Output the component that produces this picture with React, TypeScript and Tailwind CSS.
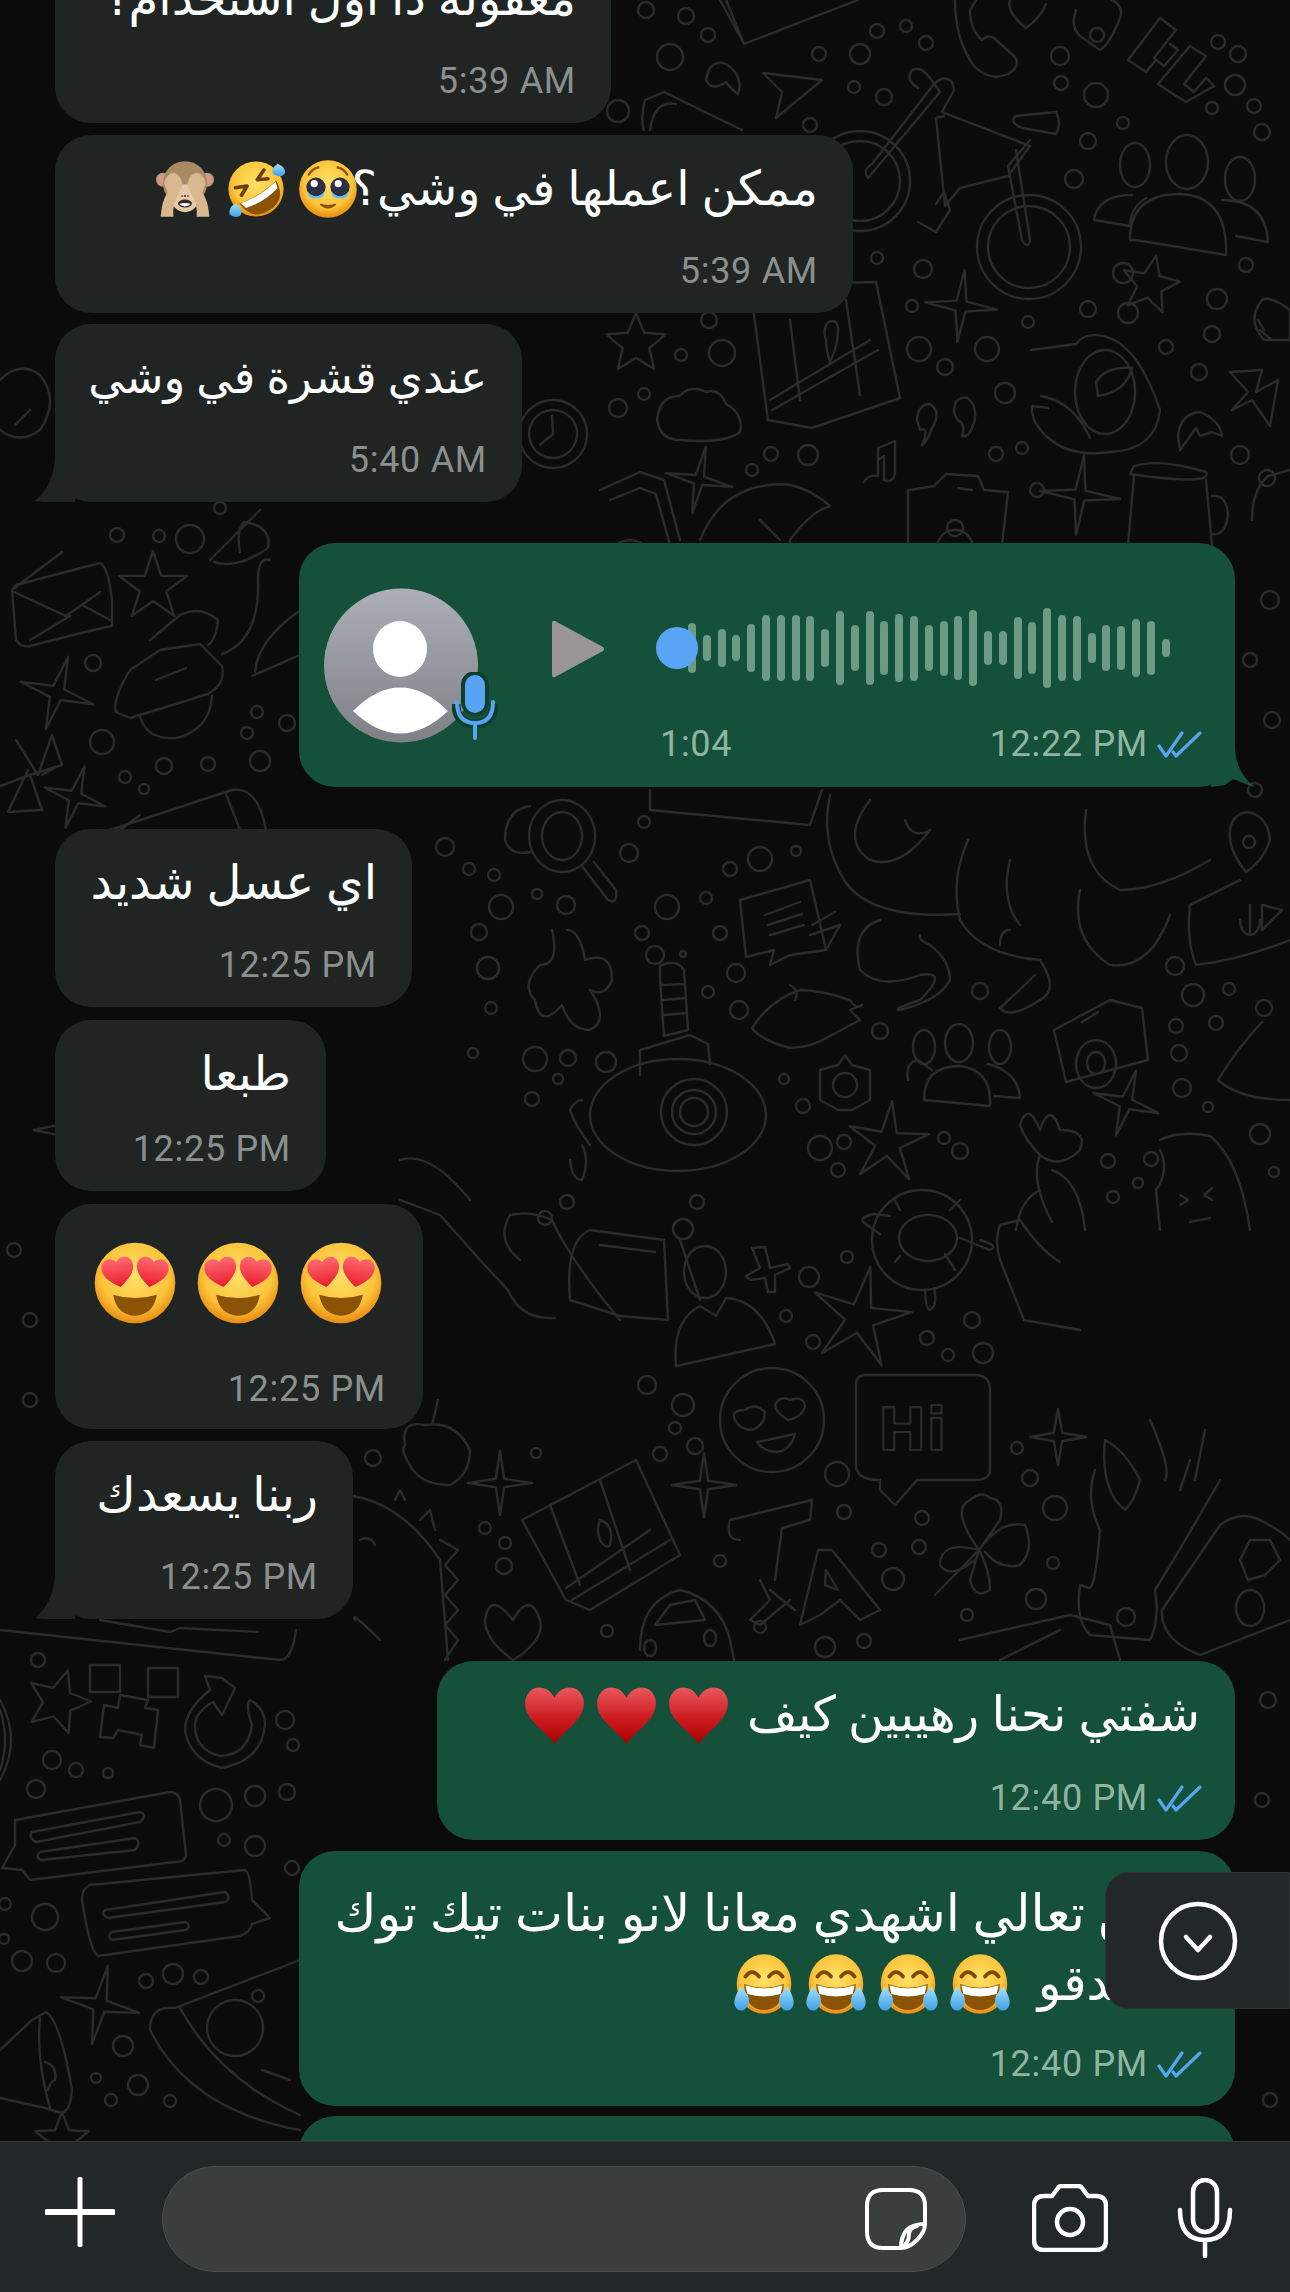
const star = (cx: number, cy: number, R: number, r: number, n: number, rot = 0) => {
  const pts: string[] = [];
  for (let i = 0; i < n * 2; i++) {
    const a = rot + (i * Math.PI) / n - Math.PI / 2;
    const d = i % 2 ? r : R;
    pts.push(`${(cx + d * Math.cos(a)).toFixed(1)} ${(cy + d * Math.sin(a)).toFixed(1)}`);
  }
  return `M${pts.join("L")}Z`;
};

const dots = [
  [646,10,8],[686,16,8],[708,35,7],[670,57,13],[819,54,7],[860,54,10],[877,31,7],[906,26,6],[926,43,7],[854,87,6],[884,97,8],[810,125,7],[618,111,11],[1060,56,9],[1061,83,7],[1096,95,12],[1123,123,6],[1088,141,8],[1074,179,9],[1218,42,7],[1238,54,8],[1235,85,10],[1212,108,6],[1254,106,7],[1262,132,8],[877,258,6],[923,269,9],[912,306,6],[1028,322,6],[919,349,12],[987,349,12],[945,367,8],[1005,393,10],[1123,273,10],[1246,265,7],[1217,299,10],[1088,309,8],[1128,313,10],[1212,334,8],[1166,347,7],[1199,372,8],[709,320,8],[681,355,6],[722,353,13],[644,394,6],[618,408,9],[771,454,7],[808,455,10],[752,470,6],[996,454,7],[1022,448,6],[1037,490,7],[1240,455,9],
  [445,847,9],[469,869,6],[494,875,6],[501,907,12],[537,894,5],[566,905,9],[479,932,8],[488,968,11],[491,1008,6],[644,822,6],[629,853,9],[667,907,12],[706,898,6],[642,933,7],[720,933,7],[655,955,9],[683,954,3],[736,973,9],[708,992,6],[739,1010,9],[730,869,7],[760,859,12],[796,851,5],[473,1053,5],[535,1059,12],[568,1058,8],[606,1062,10],[558,1079,5],[532,1099,7],[784,1079,5],[803,1106,7],[880,1031,8],[980,991,8],[1175,966,9],[1193,995,11],[1229,989,6],[1176,1026,7],[1216,1023,7],[1179,1053,8],[1182,1088,9],[1208,1107,5],[1260,1134,10],[1274,1172,5],[820,1148,12],[844,1142,7],[838,1170,7],[944,1138,6],[960,1151,8],[1108,1161,7],[1151,1159,7],[1138,1183,5],[1113,1197,6],[567,1202,7],[545,1218,7],[697,1202,7],
  [683,1229,10],[847,1257,6],[809,1277,10],[786,1316,6],[813,1342,7],[972,1320,8],[927,1338,7],[948,1355,6],[983,1353,10],[647,1385,9],[683,1405,11],[675,1428,6],[695,1446,8],[660,1454,7],[837,1474,12],[1017,1448,6],[1030,1478,8],
  [373,1458,8],[536,1453,5],[1055,1508,12],[844,1512,7],[922,1518,7],[485,1528,6],[505,1543,6],[504,1566,8],[720,1561,6],[879,1550,7],[919,1547,7],[893,1579,11],[1053,1563,6],[1036,1599,10],[967,1615,6],[1126,1617,9],[607,1631,6],[760,1627,6],[825,1647,10],[864,1641,7],
  [117,535,7],[159,536,6],[190,539,14],[220,508,6],[93,663,8],[102,742,12],[257,712,6],[287,723,8],[247,733,6],[260,761,10],[164,766,8],[208,764,7],[125,777,6],[144,789,5],
  [38,1660,7],[52,1760,9],[76,1770,7],[108,1773,5],[36,1789,9],[216,1805,16],[255,1796,10],[287,1792,8],[224,1840,6],[255,1846,10],[292,1868,7],[5,1904,6],[45,1917,13],[4,1939,5],[22,1961,10],[56,1963,9],[146,1981,7],[173,1974,10],[201,1977,7],[285,1720,9],[293,1745,6],[123,2046,10],[96,2078,5],[138,2085,10],[111,2100,6],[170,2101,6],
  [14,1250,7],[30,1320,7],[30,1400,7],[1270,600,9],[1250,660,7],[1272,720,8],[1255,790,7],[1268,1700,8],[1262,1800,7],[1270,2100,7],
];

const stars: [number, number, number, number, number, number][] = [
  [961,306,36,7,4,0.1],[1150,285,30,13,5,0.2],[636,344,31,14,5,0],[699,480,34,6,4,0.2],[1126,1103,34,7,4,0.3],[888,1143,42,13,5,0.1],[860,1318,52,15,5,0.2],[500,1483,32,6,4,0],[704,1485,32,6,4,0],[1058,1437,28,6,4,0],[153,587,36,14,5,0],[57,693,38,8,4,0.3],[75,797,32,7,4,0.3],[58,1702,33,15,5,0.3],[100,2005,40,8,4,0.2],[1080,495,40,7,4,0.1],[62,1130,28,7,4,0],[62,2140,28,12,5,0],
];

function Wallpaper() {
  return (
    <svg className="absolute inset-0" width="1290" height="2292" viewBox="0 0 1290 2292" fill="none" stroke="#2b2b2b" strokeWidth="2.4" strokeLinecap="round" strokeLinejoin="round">
      {dots.map(([x, y, r], i) => <circle key={i} cx={x} cy={y} r={r} />)}
      {stars.map((s, i) => <path key={i} d={star(s[0], s[1], s[2], s[3], s[4], s[5])} />)}

      {/* bike */}
      <circle cx="1029" cy="247" r="52" /><circle cx="1029" cy="247" r="41" />
      <circle cx="860" cy="181" r="50" /><circle cx="860" cy="181" r="40" />
      <path d="M868 178L940 92 930 78Q922 66 912 70 905 80 918 88M868 178Q862 170 872 164L934 84Q944 74 952 82L954 90 942 112 1030 146 1008 176 960 188 945 206 936 118 944 116M1016 116L1056 112Q1062 124 1056 134L1022 128Q1008 122 1016 116M1030 140L1008 166 1022 240Q1028 250 1030 240L1016 150M936 204L944 192 950 210 936 232 918 222" />
      {/* people top right */}
      <ellipse cx="1135" cy="165" rx="15" ry="22" /><ellipse cx="1187" cy="162" rx="21" ry="27" /><ellipse cx="1240" cy="179" rx="15" ry="22" />
      <path d="M1132 195Q1098 195 1094 220L1130 226Q1130 208 1146 198M1130 240Q1130 194 1180 194 1228 196 1226 255L1136 240ZM1222 200Q1266 200 1268 242L1236 236" />
      {/* handset, heart, bff */}
      <path d="M955 0Q955 40 974 66 990 82 1008 74 1022 66 1014 56L994 38Q988 34 982 40 970 30 970 10L976 0M1010 0Q1006 12 1026 28 1040 18 1046 4" />
      <path d="M1076 10Q1070 26 1080 36L1100 50Q1110 44 1120 18 1124 6 1112 0M1097 28a7 7 0 1 0 .1 0" />
      <path d="M1128 60L1160 18 1176 30 1154 58 1164 66 1178 50 1170 44M1128 60L1146 72 1156 60M1158 84L1190 46 1206 56 1184 84 1194 92 1206 78 1214 86 1186 102 1176 96Z" />
      {/* plane, comma, pencil, map etc */}
      <path d="M763 73L822 80 776 118 782 92ZM720 0L744 44 858 0M744 44L726 0" />
      <path d="M706 80Q710 58 726 64 744 76 738 94 730 88 726 82 712 92 706 80Z" />
      <path d="M645 100L664 92 742 130 M650 130Q654 100 676 104M645 100Q640 120 644 130" />
      <path d="M750 285L876 282 900 398 812 428 768 420ZM790 320L800 400M846 300L860 395M770 400L870 340M772 410L878 350M826 340Q822 330 828 322 838 318 838 330 838 346 830 362 826 350 826 340Z" />
      <path d="M657 420Q660 395 680 396 690 384 706 392 720 388 726 404 744 414 740 432 724 444 680 440 660 440 657 420Z" />
      <path d="M864 482Q868 474 878 476L878 448 895 441 895 474Q892 484 884 480L884 456 878 460" />
      <path d="M917 420Q918 404 930 404 942 412 932 428 928 440 922 445 930 426 920 430ZM955 404Q958 396 968 398 980 410 972 428 968 438 962 436 966 424 958 420 952 414 955 404Z" />
      <path d="M1031 350L1076 344Q1086 330 1110 338 1140 350 1160 410 1156 450 1110 452 1070 458 1046 436 1030 420 1032 406L1048 408M1041 396Q1074 402 1090 438M1105 350a30 42 0 1 0 .1 0M1096 382Q1106 366 1132 368 1126 392 1098 396Z" />
      <path d="M1230 372L1262 370 1256 392 1278 380 1270 426 1252 400 1232 410 1248 392Z" />
      <path d="M1178 436Q1180 414 1200 412 1220 420 1222 436L1212 432 1200 436 1196 428 1180 450Z" />
      <path d="M1262 300Q1270 295 1290 310L1290 340 1264 340Q1246 320 1262 300ZM1258 320L1264 330M1260 330L1272 340" />
      <path d="M910 490L934 486 946 474 978 476 984 490 1008 492 1002 545M908 490L908 545M958 488L972 490M955 530a18 18 0 1 0 .1 0M955 520a8 8 0 1 0 .1 0" />
      <path d="M1134 466Q1160 458 1206 472 1214 486 1130 474ZM1134 476L1128 545M1206 480L1212 545M1212 496Q1226 494 1228 514 1226 536 1212 534" />
      <path d="M1252 520Q1252 490 1268 476L1290 470M1267 470a8 8 0 1 0 .1 0" />
      <path d="M600 490L640 472 664 480 680 540M610 500L640 488 656 494 670 545M630 540a22 22 0 1 0 .1 0" />
      <path d="M700 540Q720 490 770 485 800 480 830 506 810 512 790 540 L790 545M760 520L780 540" />
      <path d="M553 400a34 34 0 1 0 .1 0M553 410a24 24 0 1 0 .1 0M552 416L553 434 540 445" />
      {/* left column 500-830 */}
      <path d="M12 590L62 552M16 585L100 563Q108 566 112 600L112 626Q100 628 30 646 22 648 16 640L12 590ZM14 592L66 616 100 592M70 616L30 640M84 606L110 620" />
      <path d="M150 640L180 615Q200 605 218 620 216 640 208 645M116 712Q112 700 130 670L160 650 200 644 222 666Q226 684 208 694L130 718ZM156 680L186 668M212 696Q210 730 176 738 146 740 140 716M222 654Q260 640 258 580 258 556 270 560M210 560L260 510M214 562Q236 570 268 548 272 526 244 522 236 530 240 552M255 672Q258 640 298 612M252 676L300 655" />
      <path d="M16 740L38 775 52 735 62 765 30 775 0 786M30 775L42 810 8 812 28 770M42 775L58 766" />
      <path d="M110 830L232 790Q258 786 266 830M226 794L240 830M120 830L140 815" />
      {/* creature and cat area */}
      <path d="M830 795Q820 840 844 880 870 920 960 914M870 800Q840 840 870 860 900 870 930 830 912 840 905 820M968 840Q950 880 960 920 980 955 1040 960 1060 990 1040 1000 1010 1020 1000 1008 1020 990 1035 975M1010 860Q1000 900 1020 925M1080 890Q1070 940 1110 965 1150 970 1170 915M1086 810Q1078 870 1120 890 1160 890 1210 860M1000 945Q1000 930 1010 930M880 920Q850 930 860 970 880 990 920 975 950 970 920 1000 890 1010 900 1010 940 1000 950 980 950 960 930 945 918 940 920 935" />
      <path d="M1240 880L1190 905Q1186 940 1196 965 1240 960 1290 940M1250 905v30M1240 920a8 12 0 0 0 20 0M1282 910L1262 930 1262 905Z" />
      <path d="M1248 812Q1268 816 1270 840 1264 860 1246 872 1228 850 1230 830 1232 814 1248 812ZM1249 836a6 6 0 1 0 .1 0" />
      <path d="M562 800a33 36 0 1 0 .1 0M562 812a20 24 0 1 0 .1 0M582 866L608 900Q618 905 616 890L594 862M530 806Q505 810 505 840 510 856 530 852" />
      <path d="M650 790L650 810 810 825 822 790" />
      <path d="M740 900L810 880 826 950 790 955 770 965 774 950 746 957ZM765 915L800 902M768 925L802 914M770 935L804 925M810 935L840 925 826 950M812 925L835 912" />
      <path d="M567 930Q580 930 585 960 612 950 612 980 605 998 590 990 610 1020 590 1030 570 1030 562 1005 540 1030 535 1000 520 985 540 965 560 965 552 930 567 930ZM567 972a10 10 0 1 0 .1 0M552 983H546M580 983H590M567 960V972M567 995V1002" />
      <path d="M660 980L664 1036 688 1030 684 970Q676 958 660 966ZM662 985L684 984M663 1000L686 998M664 1015L687 1013M640 1050L690 1035 708 1044 710 1064M640 1050V1075" />
      <ellipse cx="678" cy="1115" rx="88" ry="56" /><circle cx="694" cy="1112" r="33" /><circle cx="694" cy="1112" r="22" /><circle cx="694" cy="1112" r="14" />
      <path d="M590 1145Q575 1125 570 1110 575 1100 582 1100M570 1160Q572 1180 582 1180 590 1160 582 1145" />
      <path d="M752 1028Q770 1000 800 990 820 990 850 1000 856 1010 862 1005L850 1010 860 1020 830 1036Q810 1048 790 1048 760 1040 752 1028ZM795 1000Q800 990 790 985" />
      <path d="M845 1055L852 1065 870 1070 870 1100 852 1110 838 1110 820 1100 820 1070 838 1065ZM845 1073a12 12 0 1 0 .1 0" />
      <ellipse cx="924" cy="1047" rx="11" ry="17" /><ellipse cx="959" cy="1043" rx="14" ry="19" /><ellipse cx="1000" cy="1047" rx="11" ry="17" />
      <path d="M908 1080Q905 1062 918 1060L932 1070M924 1100Q924 1066 960 1066 992 1070 990 1106ZM988 1064Q1018 1072 1020 1098L994 1096" />
      <path d="M1054 1030L1110 1000 1142 1008 1148 1060 1066 1082ZM1082 1022L1098 1012M1096 1040a20 24 0 1 0 .1 0M1096 1052a9 11 0 1 0 .1 0" />
      <path d="M1264 1000a8 8 0 1 0 .1 0M1262 1022Q1236 1050 1218 1080 1240 1100 1290 1100" />
      <path d="M1020 1125Q1028 1100 1040 1130 1050 1100 1060 1130 1088 1130 1080 1150 1060 1170 1040 1155 1025 1140 1020 1125ZM1040 1155Q1030 1180 1052 1222M1040 1190Q1020 1200 1016 1230M1052 1170Q1080 1180 1085 1230" />
      <path d="M1160 1140Q1180 1130 1210 1136 1240 1160 1250 1230M1160 1150Q1170 1170 1156 1190L1160 1230M1180 1195L1188 1200 1180 1205M1212 1188L1204 1195 1212 1200M1190 1222L1210 1218" />
      {/* turtle */}
      <circle cx="922" cy="1240" r="50" /><ellipse cx="928" cy="1238" rx="29" ry="23" />
      <path d="M890 1216L874 1214Q856 1218 866 1224L880 1234M960 1238L990 1250Q1000 1246 980 1240M925 1290Q926 1310 930 1310 938 1306 934 1288M895 1262L900 1256M955 1270L945 1254M900 1210L895 1200M950 1210L960 1200" />
      <path d="M1000 1225L1020 1220Q1040 1250 1060 1262M1000 1260L1024 1320 1080 1330M1000 1225Q994 1240 1000 1260" />
      <ellipse cx="705" cy="1272" rx="21" ry="26" />
      <path d="M676 1366Q672 1320 700 1306L716 1316 726 1298Q760 1300 775 1344ZM752 1248L760 1268 746 1276 750 1280 765 1278 768 1292 775 1292 775 1275 790 1268 788 1264 770 1268 765 1247Z" />
      {/* love face */}
      <circle cx="772" cy="1420" r="52" />
      <path d="M735 1420Q730 1410 745 1410 755 1402 765 1412 765 1425 752 1430 740 1430 735 1420ZM775 1405Q780 1395 790 1400 805 1395 805 1408 800 1418 788 1420 775 1412 775 1405ZM757 1442L795 1434Q790 1452 775 1452 762 1450 757 1442Z" />
      {/* hi bubble */}
      <path d="M866 1375L975 1375Q990 1375 990 1390L990 1470Q990 1480 975 1480L917 1480 895 1505 880 1490 880 1480Q856 1480 856 1465L856 1385Q856 1375 866 1375Z" />
      <text x="878" y="1450" fontFamily="DejaVu Sans" fontWeight="700" fontSize="58" fill="none" strokeWidth="2.2">Hi</text>
      {/* hand */}
      <path d="M1095 1470Q1085 1500 1100 1530 1095 1590 1089 1588L1080 1585Q1075 1620 1090 1635L1150 1640Q1160 1620 1155 1590 1180 1550 1220 1480M1105 1440Q1125 1450 1140 1480 1135 1500 1125 1510 1100 1490 1105 1440ZM1150 1420Q1172 1470 1165 1480M1190 1460L1180 1490M1205 1430L1195 1480" />
      <path d="M590 1230L664 1240 668 1320 620 1316 570 1300Q565 1240 590 1230ZM600 1245L655 1252M680 1240L700 1300" />
      <path d="M520 1260Q495 1240 510 1215 530 1210 552 1220 570 1260 620 1320M508 1290L480 1260 440 1215 400 1200M400 1160Q430 1150 470 1200M508 1290Q520 1320 555 1318" />
      {/* apple, map 2, dino, clover, gamepad */}
      <path d="M405 1445Q400 1420 425 1425 455 1420 470 1450 470 1475 450 1485 420 1485 410 1465 400 1450 405 1445ZM432 1425L438 1400" />
      <path d="M522 1520L636 1460 680 1555 590 1610 566 1600ZM550 1505L580 1585M600 1480L630 1570M566 1588L650 1530M572 1600L670 1540M600 1520Q596 1530 600 1540 606 1550 610 1545 615 1525 600 1520Z" />
      <path d="M345 1495Q400 1500 440 1560L448 1660M395 1500L400 1490 405 1500M420 1520L430 1510 435 1530M440 1540L458 1550 445 1565 458 1580 445 1595 458 1610 445 1625 458 1640 445 1660M355 1620Q350 1610 380 1640M360 1540Q370 1535 375 1545" />
      <path d="M979 1550Q950 1510 970 1500 982 1490 990 1498 1005 1500 1000 1520ZM979 1550Q940 1540 940 1565 950 1580 975 1560M979 1550Q1000 1520 1025 1525 1035 1550 1020 1565 1000 1570 985 1552M979 1550Q990 1570 990 1590 975 1600 970 1580L979 1550ZM979 1550L935 1595" />
      <path d="M730 1520L812 1500 810 1520 782 1528 775 1580M740 1540Q725 1540 730 1520M760 1580L770 1600 750 1620 760 1625 790 1600M770 1590L795 1610" />
      <path d="M800 1625L818 1550 832 1550 880 1610 860 1620 840 1600 820 1615 800 1625ZM825 1585L826 1570 838 1590Z" />
      <path d="M513 1620Q490 1590 485 1620 485 1640 513 1660 545 1640 540 1620 530 1590 513 1620Z" />
      <path d="M640 1650Q640 1600 680 1590 720 1600 730 1640L734 1660M655 1625L705 1620 695 1600 670 1605ZM650 1640a6 8 0 1 0 .1 0M710 1630a6 8 0 1 0 .1 0" />
      <path d="M1162 1610L1220 1525Q1240 1510 1260 1520 1280 1530 1290 1540M1162 1610Q1160 1640 1200 1655L1290 1620M1250 1540L1270 1540 1280 1560 1265 1575 1248 1580 1240 1560ZM1250 1590a14 18 0 1 0 .1 0" />
      <path d="M960 1640L1070 1615 1110 1625 1120 1660M1000 1660L1060 1630" />
      {/* bottom left */}
      <path d="M90 1665H120V1692H90ZM148 1668H178V1697H148ZM120 1695L148 1700 145 1708 158 1710 154 1748 140 1745 142 1735 118 1730 113 1738 100 1737 104 1705 118 1708Z" />
      <path d="M222 1678L205 1676 210 1690Q185 1710 185 1730 190 1760 222 1768 262 1760 265 1725 265 1708 250 1700 245 1705 252 1725 248 1755 220 1756 195 1750 195 1725 195 1712 213 1702L222 1715 235 1688Z" />
      <path d="M15 1820L170 1792Q178 1792 180 1800L186 1855Q185 1862 175 1862L30 1880 22 1870 2 1868 15 1845ZM32 1832L140 1812Q148 1815 140 1822L36 1842Q28 1838 32 1832ZM40 1852L135 1838Q142 1842 135 1850L42 1860Q34 1858 40 1852Z" />
      <path d="M90 1885L245 1870Q250 1872 252 1900L270 1918 252 1924Q250 1932 240 1936L98 1956Q90 1952 82 1900 82 1888 90 1885ZM105 1910L225 1892Q232 1898 225 1902L108 1918Q100 1914 105 1910ZM112 1932L186 1922Q192 1926 186 1930L112 1940Q106 1936 112 1932Z" />
      <path d="M0 2050L32 2020 46 2012Q60 2020 72 2090 70 2116 58 2112L45 2108 0 2098M40 2018Q36 2060 50 2108M45 2062Q58 2066 55 2080 50 2082 48 2090" />
      <path d="M150 2030Q150 2005 175 2008L300 1960M150 2030Q190 2110 300 2130M180 2008Q220 2080 300 2115M235 2000a28 28 0 1 0 .1 0M258 1990a6 6 0 1 0 .1 0M262 2070L290 2080" />
      <path d="M0 1630L280 1660Q292 1660 296 1630M100 1620L170 1632 180 1628 258 1632" />
      <path d="M0 1700Q22 1740 0 1780M0 1710Q10 1740 0 1770" />
      <path d="M0 380Q20 360 40 375 60 400 40 430 20 445 0 430M30 410L15 425" />
    </svg>
  );
}

function Face({ size, children }: { size: number; children: React.ReactNode }) {
  return (
    <svg width={size} height={size} viewBox="0 0 100 100" className="shrink-0">
      <circle cx="50" cy="50" r="48" fill="url(#face)" />
      {children}
    </svg>
  );
}

const eyeHeart = "M0 -14C-6 -22 -20 -20 -20 -7C-20 4 -8 12 0 18C8 12 20 4 20 -7C20 -20 6 -22 0 -14Z";

function HeartEyes() {
  return (
    <Face size={84}>
      <path d={eyeHeart} fill="url(#heartEye)" transform="translate(30 38) rotate(-10) scale(.95)" />
      <path d={eyeHeart} fill="url(#heartEye)" transform="translate(70 38) rotate(10) scale(.95)" />
      <path d="M24 64Q50 72 76 64Q72 88 50 89Q28 88 24 64Z" fill="#8a5306" />
    </Face>
  );
}

function Joy({ size = 62 }: { size?: number }) {
  return (
    <svg width={size} height={size} viewBox="0 0 100 100" className="shrink-0">
      <ellipse cx="50" cy="50" rx="44" ry="48" fill="url(#face)" />
      <path d="M20 38Q30 24 42 38M58 38Q70 24 80 38" stroke="#7a4a0a" strokeWidth="6" fill="none" strokeLinecap="round" />
      <path d="M18 50Q50 62 82 50Q80 92 50 92Q20 92 18 50Z" fill="#8a5306" />
      <path d="M20 52Q50 62 80 52L77 66Q50 74 23 66Z" fill="#fff" />
      <path d="M12 54Q2 70 2 82Q6 96 18 92Q30 82 24 68Z" fill="url(#tear)" />
      <path d="M88 54Q98 70 98 82Q94 96 82 92Q70 82 76 68Z" fill="url(#tear)" />
    </svg>
  );
}

function Rofl() {
  return (
    <svg width="60" height="60" viewBox="0 0 100 100" className="shrink-0">
      <circle cx="50" cy="50" r="46" fill="url(#face)" />
      <g transform="rotate(-32 50 50)">
        <path d="M22 30L40 38 24 46M78 30L60 38 76 46" stroke="#6b3f08" strokeWidth="6" fill="none" strokeLinecap="round" strokeLinejoin="round" />
        <path d="M14 56Q50 64 86 56Q84 92 50 92Q16 92 14 56Z" fill="#8a5306" />
        <path d="M16 57Q50 64 84 57L81 68Q50 76 19 68Z" fill="#fff" />
      </g>
      <path d="M86 8Q100 14 98 24Q92 32 80 26Q72 18 86 8Z" fill="url(#tear)" />
      <path d="M16 74Q4 80 6 92Q14 100 24 94Q30 84 16 74Z" fill="url(#tear)" />
    </svg>
  );
}

function Pleading() {
  return (
    <Face size={60}>
      <path d="M18 26Q24 16 34 14M82 26Q76 16 66 14" stroke="#8a5306" strokeWidth="4" fill="none" strokeLinecap="round" />
      <circle cx="30" cy="47" r="16" fill="#2b3044" /><circle cx="70" cy="47" r="16" fill="#2b3044" />
      <circle cx="27" cy="41" r="6" fill="#fff" /><circle cx="67" cy="41" r="6" fill="#fff" />
      <path d="M16 54Q30 70 44 54Q44 66 30 66Q16 66 16 54Z" fill="#5cc0f0" />
      <path d="M56 54Q70 70 84 54Q84 66 70 66Q56 66 56 54Z" fill="#5cc0f0" />
      <path d="M38 76Q50 86 62 76Q50 80 38 76Z" fill="#8a5306" stroke="#8a5306" strokeWidth="3" strokeLinejoin="round" />
    </Face>
  );
}

function Monkey() {
  return (
    <svg width="58" height="58" viewBox="0 0 100 100" className="shrink-0">
      <circle cx="12" cy="34" r="12" fill="#c49a7e" /><circle cx="88" cy="34" r="12" fill="#c49a7e" />
      <circle cx="12" cy="34" r="7" fill="#d99a8c" /><circle cx="88" cy="34" r="7" fill="#d99a8c" />
      <ellipse cx="50" cy="40" rx="38" ry="38" fill="#a98a64" />
      <ellipse cx="50" cy="66" rx="24" ry="24" fill="#e5c9a8" />
      <ellipse cx="50" cy="75" rx="12" ry="7" fill="#3a2a20" />
      <path d="M40 76Q50 84 60 76Q50 72 40 76Z" fill="#fff" />
      <path d="M8 98Q10 70 20 56L14 40Q20 20 32 22Q44 26 46 44L38 60Q28 76 30 98Z" fill="#d9b78f" />
      <path d="M92 98Q90 70 80 56L86 40Q80 20 68 22Q56 26 54 44L62 60Q72 76 70 98Z" fill="#d9b78f" />
      <circle cx="50" cy="62" r="2" fill="#6b4a34" /><circle cx="45" cy="62" r="1.5" fill="#6b4a34" /><circle cx="55" cy="62" r="1.5" fill="#6b4a34" />
    </svg>
  );
}

function RedHeart() {
  return (
    <svg width="61" height="58" viewBox="0 0 100 96" className="shrink-0">
      <path d="M50 20C42 2 22 -2 10 8C-4 22 0 42 14 58C26 72 42 84 50 96C58 84 74 72 86 58C100 42 104 22 90 8C78 -2 58 2 50 20Z" fill="url(#redHeart)" />
    </svg>
  );
}

function Ticks() {
  return (
    <svg width="45" height="27" viewBox="0 0 45 27" fill="none" stroke="#56a5ee" strokeWidth="3.2" strokeLinecap="round" strokeLinejoin="round" className="shrink-0">
      <path d="M2 15L9 25L25 2" />
      <path d="M16 21L19 25L43 2" />
    </svg>
  );
}

function IncomingTail() {
  return (
    <svg className="absolute left-[-20px] bottom-0" width="40" height="46" viewBox="0 0 40 46">
      <path d="M20 0C20 18 12 36 0 45C10 47 26 46 40 46L40 20Z" fill="#202524" />
    </svg>
  );
}

function OutgoingTail() {
  return (
    <svg className="absolute right-[-20px] bottom-0" width="44" height="40" viewBox="0 0 44 40">
      <path d="M24 0C24 14 30 30 44 40C36 38 28 34 22 32L14 38L0 40L0 0Z" fill="#15503a" />
    </svg>
  );
}

function Incoming({ text, time, width, tail, emoji, className, textClass, timeGap }: { text?: string; time: string; width: string; tail?: boolean; emoji?: React.ReactNode; className?: string; textClass?: string; timeGap?: string }) {
  return (
    <div className={`relative shrink-0 self-start rounded-[36px] bg-[#202524] pt-[22px] pb-[22px] pr-[35px] pl-[36px] ${width} ${className ?? ""}`}>
      <div dir="rtl" className={`flex h-[64px] items-center whitespace-nowrap leading-[64px] text-white ${textClass ?? "text-[48px]"}`}>
        {text}
        {emoji}
      </div>
      <div className={`${timeGap ?? "mt-[30px]"} h-[40px] text-right text-[36px] leading-[40px] tracking-[0.7px] text-[#8b8f8e]`}>{time}</div>
      {tail && <IncomingTail />}
    </div>
  );
}

function OutTime({ time }: { time: string }) {
  return (
    <div className="flex h-[40px] items-center justify-end gap-[9px] pr-[33px] text-[36px] leading-[40px] tracking-[0.7px] text-[#8fb5a2]">
      {time}
      <Ticks />
    </div>
  );
}

const bars = [152,80,115,80,145,200,200,200,195,115,220,140,220,160,205,195,140,165,190,230,100,100,185,155,240,200,195,90,140,130,175,160,55];

function VoiceBubble() {
  return (
    <div className="relative mt-[41px] flex h-[244px] w-[936px] shrink-0 self-end rounded-[36px] bg-[#15503a] pl-[25px] pt-[45px]">
      <div className="relative h-[155px] w-[154px] shrink-0">
        <svg width="154" height="155" viewBox="0 0 154 155">
          <defs>
            <clipPath id="avatarClip"><circle cx="77" cy="77.5" r="77" /></clipPath>
          </defs>
          <circle cx="77" cy="77.5" r="77" fill="url(#avatarBg)" />
          <g clipPath="url(#avatarClip)">
            <ellipse cx="76" cy="61" rx="27" ry="28" fill="#fff" />
            <path d="M29 123Q76 76 124 123Q76 168 29 123Z" fill="#fff" />
          </g>
        </svg>
        <svg className="absolute left-[128px] top-[84px]" width="46" height="68" viewBox="0 0 46 68" fill="none">
          <path d="M4 32Q4 52 23 52Q42 52 42 32" stroke="#0f3f2c" strokeWidth="9" />
          <rect x="9" y="-1" width="28" height="45" rx="14" fill="#0f3f2c" />
          <rect x="13" y="3" width="20" height="38" rx="10" fill="#57a5f2" />
          <path d="M5 30Q5 51 23 51Q41 51 41 30M23 51V66" stroke="#57a5f2" strokeWidth="4" strokeLinecap="round" />
        </svg>
      </div>
      <svg className="ml-[74px] mt-[31px] shrink-0" width="53" height="59" viewBox="0 0 53 59">
        <path d="M3 2L51 28Q53 30 51 32L3 58Q0 59 0 56V4Q0 1 3 2Z" fill="#9a9693" />
      </svg>
      <div className="ml-[51px] mt-[15px] w-[546px]">
        <div className="relative flex h-[90px] items-center gap-[6.8px] pl-[32px]">
          {bars.map((h, i) => (
            <div key={i} className="w-[8px] shrink-0 rounded-full bg-[#6b9a85]" style={{ height: h / 3 }} />
          ))}
          <div className="absolute left-0 top-[24px] h-[42px] w-[42px] rounded-full bg-[#5aa4f6]" />
        </div>
        <div className="mt-[31px] flex h-[40px] items-center justify-between text-[36px] leading-[40px] tracking-[0.7px] text-[#8fb5a2]">
          <span className="ml-[4px]">1:04</span>
          <div className="flex items-center gap-[9px]">12:22 PM<Ticks /></div>
        </div>
      </div>
      <OutgoingTail />
    </div>
  );
}

function ScrollButton() {
  return (
    <div className="absolute right-0 top-[1872px] flex h-[137px] w-[185px] items-center rounded-l-[24px] border border-[#2e3332] bg-[#222727] pl-[52px]">
      <svg width="80" height="80" viewBox="0 0 80 80" fill="none" stroke="#fff" strokeWidth="4.5" strokeLinecap="round" strokeLinejoin="round">
        <circle cx="40" cy="40" r="37" />
        <path d="M28 36L40 49L52 36" />
      </svg>
    </div>
  );
}

function InputBar() {
  return (
    <div className="relative flex h-[151px] shrink-0 items-start border-t border-[#333837] bg-[#222727] pt-[24px]">
      <svg className="ml-[45px] mt-[11px]" width="70" height="70" viewBox="0 0 70 70" stroke="#fff" strokeLinecap="round">
        <path d="M2 35H68" strokeWidth="6" />
        <path d="M35 2V68" strokeWidth="5" />
      </svg>
      <div className="ml-[47px] flex h-[106px] w-[804px] shrink-0 items-center justify-end rounded-[53px] border border-[#4b4f4e] bg-[#3a3e3d] pr-[38px]">
        <svg width="62" height="62" viewBox="0 0 62 62" fill="none" stroke="#fff" strokeWidth="4" strokeLinecap="round" strokeLinejoin="round">
          <path d="M2 18Q2 2 18 2H44Q60 2 60 18V36Q60 44 52 52Q44 60 36 60H18Q2 60 2 44Z" />
          <path d="M36 60Q36 36 60 36M36 60Q44 56 44 46Q44 40 52 38" />
        </svg>
      </div>
      <svg className="ml-[66px] mt-[18px]" width="76" height="68" viewBox="0 0 76 68" fill="none" stroke="#fff" strokeWidth="4.5" strokeLinecap="round" strokeLinejoin="round">
        <path d="M12 12H20L26 4Q27 2 30 2H46Q49 2 50 4L56 12H64Q74 12 74 22V56Q74 66 64 66H12Q2 66 2 56V22Q2 12 12 12Z" />
        <circle cx="38" cy="38" r="13" />
      </svg>
      <svg className="ml-[69px] mt-[12px]" width="56" height="80" viewBox="0 0 56 80" fill="none" stroke="#fff" strokeWidth="4.5" strokeLinecap="round">
        <rect x="16" y="2" width="24" height="52" rx="12" />
        <path d="M3 32Q3 62 28 62Q53 62 53 32M28 62V78" />
      </svg>
    </div>
  );
}

export default function App() {
  return (
    <div className="relative flex h-[2292px] w-[1290px] flex-col overflow-hidden bg-[#0b0b0b] font-['Roboto','DejaVu_Sans',sans-serif]">
      <svg className="absolute h-0 w-0">
        <defs>
          <radialGradient id="face" cx="50%" cy="40%" r="60%">
            <stop offset="0%" stopColor="#ffe169" />
            <stop offset="70%" stopColor="#fbc43a" />
            <stop offset="100%" stopColor="#e88a12" />
          </radialGradient>
          <linearGradient id="heartEye" x1="0" y1="0" x2="0" y2="1">
            <stop offset="0%" stopColor="#ff6a72" />
            <stop offset="100%" stopColor="#e81c2c" />
          </linearGradient>
          <linearGradient id="tear" x1="0" y1="0" x2="0" y2="1">
            <stop offset="0%" stopColor="#a5e0fb" />
            <stop offset="100%" stopColor="#3d9fe8" />
          </linearGradient>
          <linearGradient id="redHeart" x1="0" y1="0" x2="0" y2="1">
            <stop offset="0%" stopColor="#e8585e" />
            <stop offset="55%" stopColor="#cc1b1f" />
            <stop offset="100%" stopColor="#a90000" />
          </linearGradient>
          <linearGradient id="avatarBg" x1="0" y1="0" x2="0" y2="1">
            <stop offset="0%" stopColor="#adafb8" />
            <stop offset="100%" stopColor="#7f8087" />
          </linearGradient>
        </defs>
      </svg>
      <Wallpaper />

      <div className="relative flex min-h-0 flex-1 flex-col overflow-hidden px-[55px]">
        <Incoming text="معقولة دا أول استخدام؟" time="5:39 AM" width="w-[556px]" className="mt-[-55px]" />
        <Incoming
          text="ممكن اعملها في وشي؟"
          time="5:39 AM"
          width="w-[798px]"
          className="mt-[12px]"
          emoji={
            <span className="mr-[-6px] flex items-center gap-[12px]">
              <Pleading />
              <Rofl />
              <Monkey />
            </span>
          }
        />
        <Incoming text="عندي قشرة في وشي" time="5:40 AM" width="w-[467px]" tail className="mt-[11px]" textClass="text-[45px]" />
        <VoiceBubble />
        <Incoming text="اي عسل شديد" time="12:25 PM" width="w-[357px]" className="mt-[42px]" />
        <Incoming text="طبعا" time="12:25 PM" width="w-[271px]" className="mt-[13px]" timeGap="mt-[23px]" />

        <div className="relative mt-[13px] h-[225px] w-[368px] shrink-0 self-start rounded-[36px] bg-[#202524] pr-[40px] pt-[37px]">
          <div className="flex justify-end gap-[19px]">
            <HeartEyes />
            <HeartEyes />
            <HeartEyes />
          </div>
          <div className="mr-[-3px] mt-[44px] h-[40px] text-right text-[36px] leading-[40px] tracking-[0.7px] text-[#8b8f8e]">12:25 PM</div>
        </div>

        <Incoming text="ربنا يسعدك" time="12:25 PM" width="w-[298px]" tail className="mt-[12px]" />

        <div className="mt-[42px] h-[179px] w-[798px] shrink-0 self-end rounded-[36px] bg-[#15503a] pt-[22px]">
          <div dir="rtl" className="flex h-[64px] items-center gap-[18px] whitespace-nowrap pr-[35px] text-[49px] leading-[64px] text-white">
            شفتي نحنا رهيبين كيف
            <span className="flex gap-[11px]">
              <RedHeart />
              <RedHeart />
              <RedHeart />
            </span>
          </div>
          <div className="mt-[31px]"><OutTime time="12:40 PM" /></div>
        </div>

        <div className="mt-[11px] h-[255px] w-[936px] shrink-0 self-end rounded-[36px] bg-[#15503a] pt-[28px]">
          <div dir="rtl" className="whitespace-nowrap pr-[37px] leading-[70px] text-white">
            <div className="mr-[5px] h-[70px] text-[51px]">يا بن تعالي اشهدي معانا لانو بنات تيك توك</div>
            <div className="flex h-[70px] items-center gap-[27px] text-[49px]">
              بيتصدقو
              <span className="flex gap-[10px]">
                <Joy />
                <Joy />
                <Joy />
                <Joy />
              </span>
            </div>
          </div>
          <div className="mt-[25px]"><OutTime time="12:40 PM" /></div>
        </div>

        <div className="mt-[10px] h-[60px] w-[936px] shrink-0 self-end rounded-t-[36px] bg-[#15503a]" />
      </div>

      <ScrollButton />
      <InputBar />
    </div>
  );
}
